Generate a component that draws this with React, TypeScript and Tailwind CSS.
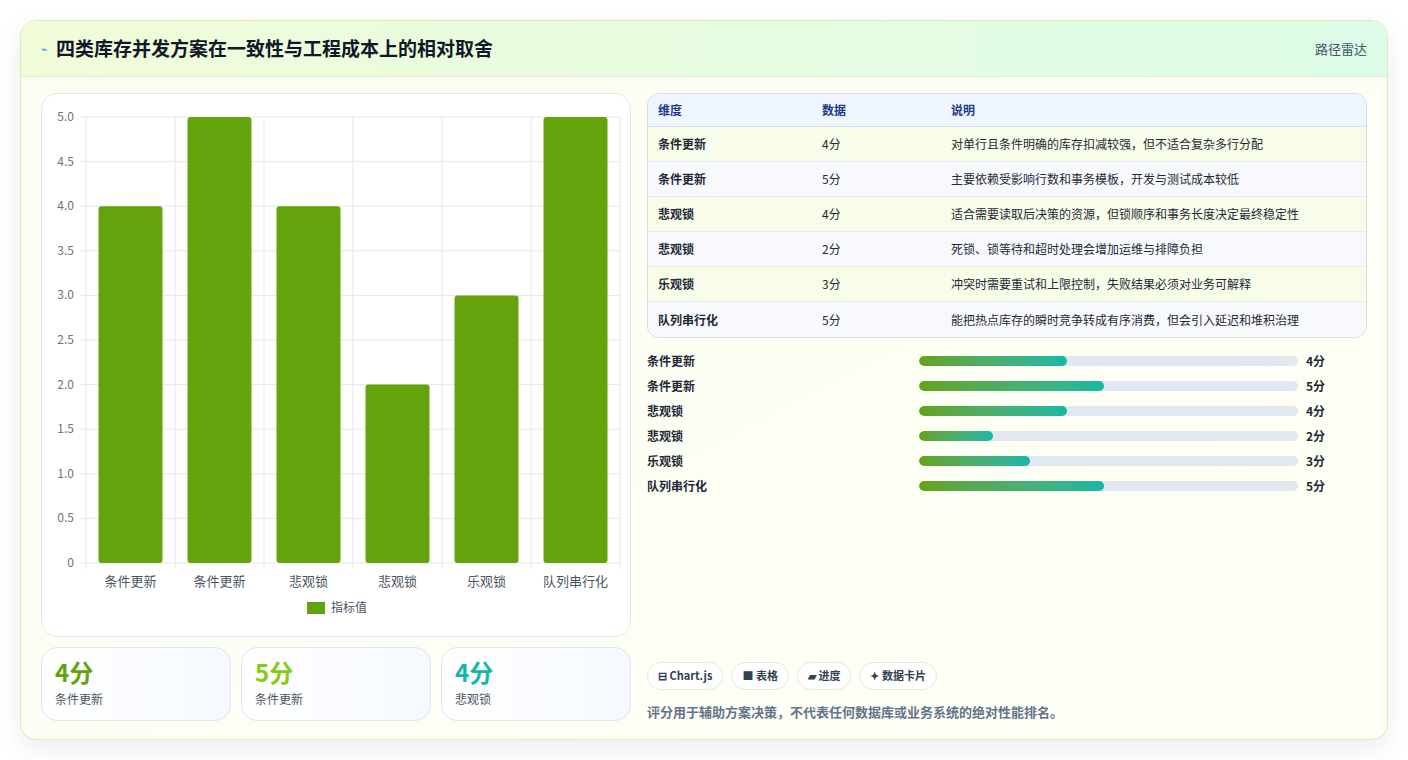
const rows = [
  { name: "条件更新", v: 4, desc: "对单行且条件明确的库存扣减较强，但不适合复杂多行分配" },
  { name: "条件更新", v: 5, desc: "主要依赖受影响行数和事务模板，开发与测试成本较低" },
  { name: "悲观锁", v: 4, desc: "适合需要读取后决策的资源，但锁顺序和事务长度决定最终稳定性" },
  { name: "悲观锁", v: 2, desc: "死锁、锁等待和超时处理会增加运维与排障负担" },
  { name: "乐观锁", v: 3, desc: "冲突时需要重试和上限控制，失败结果必须对业务可解释" },
  { name: "队列串行化", v: 5, desc: "能把热点库存的瞬时竞争转成有序消费，但会引入延迟和堆积治理" },
];

const font = { fontFamily: '"Noto Sans CJK SC", "Noto Sans", sans-serif' };

const Chart = () => {
  const L = 44, R = 578, T = 23, B = 469;
  const cw = (R - L) / 6;
  const unit = (B - T) / 5;
  const ticks = [0, 0.5, 1, 1.5, 2, 2.5, 3, 3.5, 4, 4.5, 5];
  return (
    <svg width="588" height="541" className="block" style={font}>
      {ticks.map((t) => (
        <g key={t}>
          <line x1={L - 6} x2={R} y1={B - t * unit} y2={B - t * unit} stroke="#e5e7eb" />
          <text x={L - 12} y={B - t * unit + 4} textAnchor="end" fontSize="12" fill="#6b7280">
            {t === 0 ? "0" : t.toFixed(1)}
          </text>
        </g>
      ))}
      {Array.from({ length: 7 }).map((_, i) => (
        <line key={i} x1={L + i * cw} x2={L + i * cw} y1={T} y2={B + 6} stroke="#e5e7eb" />
      ))}
      {rows.map((r, i) => (
        <g key={i}>
          <rect x={L + i * cw + 12.5} y={B - r.v * unit} width={64} height={r.v * unit} rx="3" fill="#65a30d" />
          <text x={L + i * cw + cw / 2} y={492} textAnchor="middle" fontSize="13" fill="#4b5563">{r.name}</text>
        </g>
      ))}
      <rect x="265" y="508" width="18" height="12" fill="#65a30d" />
      <text x="289" y="518" fontSize="12" fill="#4b5563">指标值</text>
    </svg>
  );
};

const stats = [
  { v: "4分", n: "条件更新", c: "text-[#65a30d]" },
  { v: "5分", n: "条件更新", c: "text-[#84cc16]" },
  { v: "4分", n: "悲观锁", c: "text-[#14b8a6]" },
];

export default function App() {
  return (
    <div className="w-[1408px] h-[760px] bg-white p-5 pb-5" style={font}>
      <div className="h-[720px] rounded-2xl border border-[#d9f0a8] overflow-hidden shadow-[0_8px_24px_rgba(0,0,0,0.08)] bg-gradient-to-br from-[#fbfef3] to-[#fefff5] flex flex-col">
        <div className="h-[56px] shrink-0 flex items-center justify-between px-5 bg-gradient-to-r from-[#f1fcd9] to-[#dcfce7] border-b border-[#e2ecd8]">
          <div className="flex items-center gap-2">
            <span className="text-[11px] text-[#3b82f6]">⌁</span>
            <h1 className="text-[19px] font-bold text-[#111827]">四类库存并发方案在一致性与工程成本上的相对取舍</h1>
          </div>
          <span className="text-[13px] text-[#475569]">路径雷达</span>
        </div>
        <div className="flex-1 flex gap-4 px-5 pt-4 pb-5">
          <div className="w-[590px] flex flex-col gap-[10px]">
            <div className="h-[544px] rounded-2xl border border-[#e5e7eb] bg-white">
              <Chart />
            </div>
            <div className="grid grid-cols-3 gap-[10px]">
              {stats.map((s, i) => (
                <div key={i} className="h-[74px] rounded-2xl border border-[#dde6f0] bg-gradient-to-r from-white to-[#f5f9ff] px-[13px] pt-2">
                  <div className={`text-[24px] font-bold leading-[32px] ${s.c}`}>{s.v}</div>
                  <div className="text-[12px] text-[#4b5563] mt-[2px]">{s.n}</div>
                </div>
              ))}
            </div>
          </div>
          <div className="flex-1 flex flex-col">
            <div className="rounded-xl border border-[#d5dde8] overflow-hidden text-[12px]">
              <div className="flex h-[33px] items-center bg-[#eef5ff] border-b border-[#d5dde8] font-semibold text-[#1e3a8a]">
                <div className="w-[174px] pl-[10px]">维度</div>
                <div className="w-[129px]">数据</div>
                <div>说明</div>
              </div>
              {rows.map((r, i) => (
                <div key={i} className={`flex h-[35px] items-center text-[#1f2937] ${i < 5 ? "border-b border-[#e5eaf0]" : ""} ${i % 2 === 0 ? "bg-[#f7fde9]" : "bg-[#f7f9fc]"}`}>
                  <div className="w-[174px] pl-[10px] font-semibold">{r.name}</div>
                  <div className="w-[129px]">{r.v}分</div>
                  <div>{r.desc}</div>
                </div>
              ))}
            </div>
            <div className="mt-[10px] flex flex-col">
              {rows.map((r, i) => (
                <div key={i} className="h-[25px] flex items-center text-[12px] font-semibold text-[#1f2937]">
                  <div className="w-[272px]">{r.name}</div>
                  <div className="w-[379px] h-[10px] rounded-full bg-[#e2e8f0] overflow-hidden">
                    <div className="h-full rounded-full bg-gradient-to-r from-[#65a30d] to-[#14b8a6]" style={{ width: `${r.v * 37}px` }} />
                  </div>
                  <div className="ml-2">{r.v}分</div>
                </div>
              ))}
            </div>
            <div className="mt-auto flex gap-2 text-[11px] font-semibold text-[#334155]">
              <span className="h-[28px] px-[10px] rounded-full border border-[#e5e7eb] bg-white flex items-center">⊟ Chart.js</span>
              <span className="h-[28px] px-[10px] rounded-full border border-[#e5e7eb] bg-white flex items-center">■ 表格</span>
              <span className="h-[28px] px-[10px] rounded-full border border-[#e5e7eb] bg-white flex items-center">▰ 进度</span>
              <span className="h-[28px] px-[10px] rounded-full border border-[#e5e7eb] bg-white flex items-center">✦ 数据卡片</span>
            </div>
            <p className="mt-[12px] text-[13px] font-semibold text-[#64748b]">评分用于辅助方案决策，不代表任何数据库或业务系统的绝对性能排名。</p>
          </div>
        </div>
      </div>
    </div>
  );
}
